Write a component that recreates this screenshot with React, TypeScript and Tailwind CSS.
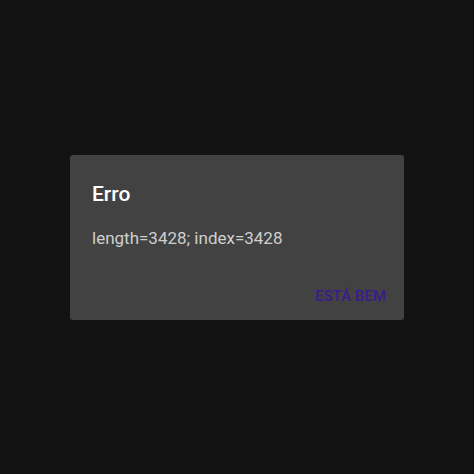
export default function App() {
  return (
    <div className="w-[474px] h-[474px] bg-[#131313] flex items-center justify-center" style={{ fontFamily: 'Roboto, "Noto Sans", sans-serif' }}>
      <div className="w-[334px] h-[165px] bg-[#424242] rounded-[3px] flex flex-col pl-[22px] pr-[18px]">
        <div className="mt-[25px] text-[21px] leading-[28px] font-medium text-white">Erro</div>
        <div className="mt-[18px] text-[17px] leading-[24px] text-[#cfcfcf]">length=3428; index=3428</div>
        <div className="mt-auto mb-[14px] flex justify-end">
          <span className="text-[15px] leading-[20px] font-medium text-[#3b1a8e]">ESTÁ BEM</span>
        </div>
      </div>
    </div>
  );
}
